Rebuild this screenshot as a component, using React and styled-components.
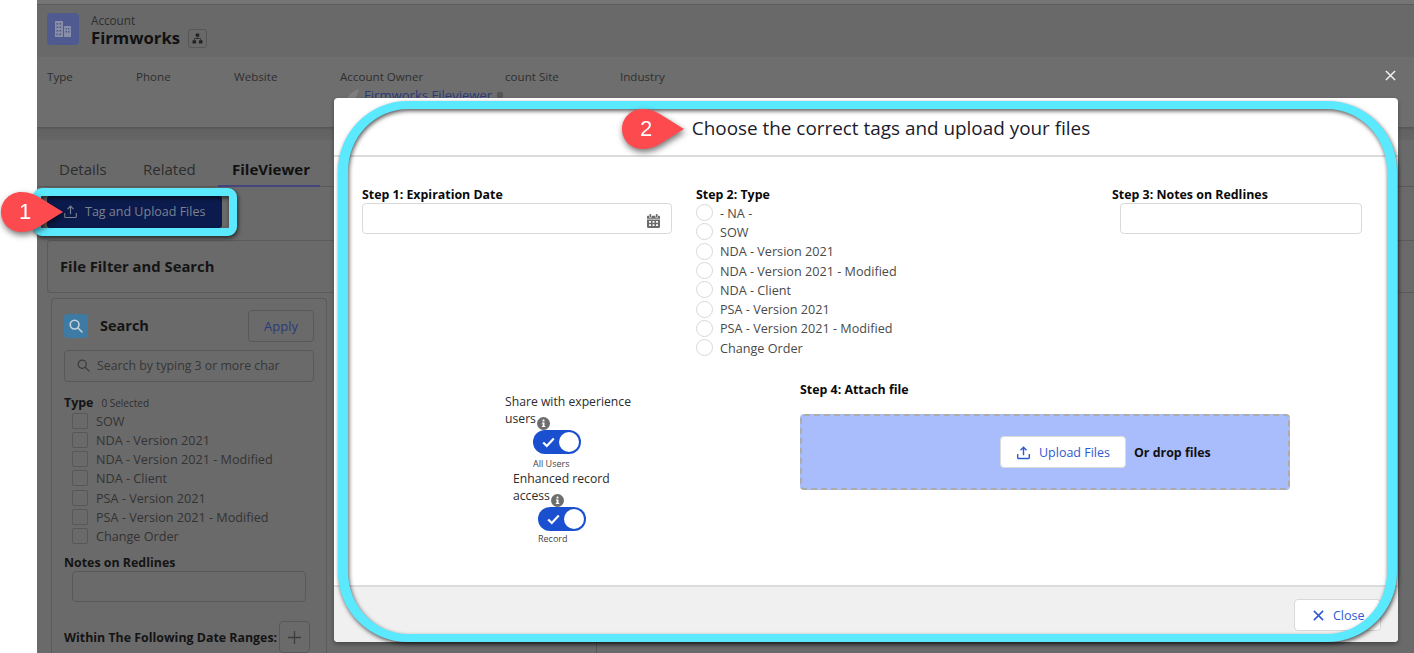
import React from "react";
import styled, { createGlobalStyle } from "styled-components";

const Global = createGlobalStyle`
  html, body { margin: 0; padding: 0; background: #fff; }
  body { font-family: "Open Sans", "Noto Sans", "Liberation Sans", sans-serif; }
  * { box-sizing: border-box; }
`;

const Screen = styled.div`
  position: relative;
  display: flex;
  width: 1414px;
  height: 653px;
  overflow: hidden;
  background: #fff;
`;
const Gutter = styled.div`width: 37px; flex: none; background: #fff;`;
const Page = styled.div`
  flex: 1;
  display: flex;
  flex-direction: column;
  min-width: 0;
  background: #6a6a6a;
  color: #333;
  font-size: 12px;
`;
const TopSliver = styled.div`
  height: 5px;
  background: #757575;
  border-bottom: 1px solid #5c5c5c;
`;
const RecordHeader = styled.div`
  height: 52px;
  display: flex;
  align-items: flex-start;
  padding: 8px 0 0 10px;
  background: #696969;
`;
const ObjectIcon = styled.div`
  width: 32px;
  height: 32px;
  border-radius: 4px;
  background: #4e5a90;
  display: grid;
  place-items: center;
`;
const RecordTitle = styled.div`
  margin-left: 12px;
  display: flex;
  flex-direction: column;
`;
const RecordType = styled.div`
  font-size: 11.7px;
  line-height: 14px;
  color: #2e2e2e;
`;
const RecordNameRow = styled.div`display: flex; align-items: center; gap: 8px; margin-top: 1px;`;
const RecordName = styled.div`
  font-size: 16.7px;
  line-height: 20px;
  font-weight: 700;
  color: #111;
`;
const HierarchyButton = styled.div`
  width: 19px;
  height: 19px;
  border: 1px solid #565656;
  border-radius: 3px;
  display: grid;
  place-items: center;
`;
const Highlights = styled.div`
  height: 70px;
  display: flex;
  padding: 13px 0 0 10px;
  background: #6e6e6e;
`;
const Field = styled.div`
  width: ${p => p.$w}px;
  flex: none;
  font-size: 11.6px;
  line-height: 14px;
  color: #2f2f2f;
`;
const OwnerLink = styled.div`
  display: flex;
  align-items: center;
  gap: 4px;
  margin-top: 4px;
  margin-left: 5px;
  color: #2b3a78;
  font-size: 13.1px;
  white-space: nowrap;
`;
const Strip = styled.div`
  height: 13px;
  background: linear-gradient(180deg, #555 0, #626262 3px, #666 100%);
`;
const Tabs = styled.div`
  height: 47px;
  display: flex;
  align-items: flex-end;
  padding-left: 22px;
  border-bottom: 1px solid #5a5a5a;
`;
const Tab = styled.div`
  width: ${p => p.$w}px;
  flex: none;
  height: 37px;
  padding-left: ${p => p.$pl}px;
  padding-top: 9px;
  font-size: 15px;
  line-height: 20px;
  font-weight: ${p => (p.$active ? 700 : 400)};
  color: ${p => (p.$active ? "#111" : "#2d2d2d")};
  border-bottom: 2px solid ${p => (p.$active ? "#43467f" : "transparent")};
  margin-bottom: -1px;
`;
const ActionBar = styled.div`
  height: 53px;
  padding: 9px 0 0 10px;
`;
const PrimaryButton = styled.div`
  width: 175px;
  height: 32px;
  display: flex;
  align-items: center;
  gap: 7px;
  padding-left: 16px;
  background: #0b1b4d;
  border-radius: 3px;
  color: #7c8290;
  font-size: 12.5px;
  white-space: nowrap;
`;
const CardHead = styled.div`
  height: 53px;
  margin-left: 10px;
  display: flex;
  align-items: center;
  padding-left: 12px;
  border: 1px solid #5a5a5a;
  border-right: none;
  border-top-left-radius: 4px;
  border-bottom-left-radius: 4px;
  font-size: 14.8px;
  font-weight: 700;
  color: #141414;
`;
const LowerRow = styled.div`
  flex: 1;
  display: flex;
  padding-top: 5px;
`;
const FilterPanel = styled.div`
  width: 276px;
  margin-left: 14px;
  flex: none;
  padding: 11px 12px 0 12px;
  border: 1px solid #5a5a5a;
  border-bottom: none;
  border-radius: 4px 4px 0 0;
`;
const ResultPane = styled.div`
  width: 100%;
  margin-left: 269px;
  border-left: 1px solid #565656;
`;
const SearchHead = styled.div`
  display: flex;
  align-items: center;
  height: 32px;
`;
const SearchIcon = styled.div`
  width: 24px;
  height: 24px;
  border-radius: 4px;
  background: #3d7ba5;
  display: grid;
  place-items: center;
`;
const SearchTitle = styled.div`
  flex: 1;
  margin-left: 12px;
  font-size: 14.5px;
  font-weight: 700;
  color: #141414;
`;
const ApplyButton = styled.div`
  width: 66px;
  height: 32px;
  border: 1px solid #585858;
  border-radius: 4px;
  display: grid;
  place-items: center;
  font-size: 13px;
  color: #2b3a78;
`;
const SearchBox = styled.div`
  height: 32px;
  margin-top: 8px;
  display: flex;
  align-items: center;
  gap: 7px;
  padding-left: 12px;
  border: 1px solid #585858;
  border-radius: 4px;
  color: #363636;
  font-size: 12.3px;
  white-space: nowrap;
`;
const TypeHead = styled.div`
  display: flex;
  align-items: baseline;
  gap: 8px;
  margin-top: 13px;
  line-height: 16px;
`;
const BoldLabel = styled.div`
  font-size: 12.4px;
  font-weight: 700;
  color: #141414;
  white-space: nowrap;
`;
const SmallCount = styled.span`font-size: 10px; color: #2e2e2e;`;
const CheckList = styled.div`display: flex; flex-direction: column; padding-left: 8px;`;
const CheckRow = styled.div`
  height: 19.3px;
  display: flex;
  align-items: center;
  gap: 8px;
  font-size: 12.65px;
  color: #333;
  white-space: nowrap;
`;
const CheckBox = styled.div`
  width: 16px;
  height: 16px;
  border: 1px solid #585858;
  border-radius: 2px;
`;
const NotesLabel = styled(BoldLabel)`margin-top: 8px; line-height: 17px;`;
const FilterInput = styled.div`
  width: 234px;
  height: 31px;
  margin-left: 8px;
  border: 1px solid #585858;
  border-radius: 4px;
`;
const RangeRow = styled.div`
  display: flex;
  align-items: center;
  margin-top: 19px;
`;
const PlusButton = styled.div`
  width: 31px;
  height: 32px;
  flex: none;
  border: 1px solid #585858;
  border-radius: 4px;
  display: grid;
  place-items: center;
  margin-left: auto;
  margin-right: 4px;
`;

/* Modal, over the page */
const ModalClose = styled.div`
  position: absolute;
  left: 1384px;
  top: 69px;
  width: 12px;
  height: 12px;
  display: grid;
  place-items: center;
`;
const Modal = styled.div`
  position: absolute;
  left: 334px;
  top: 98px;
  width: 1064px;
  height: 544px;
  display: flex;
  flex-direction: column;
  background: #fff;
  border-radius: 4px;
  box-shadow: 0 2px 4px rgba(0,0,0,.35);
  overflow: hidden;
  color: #444;
`;
const ModalHeader = styled.div`
  height: 59px;
  flex: none;
  display: flex;
  justify-content: center;
  padding: 17px 0 0 50px;
  border-bottom: 2px solid #dcdcdc;
`;
const ModalTitle = styled.div`
  font-size: 18.9px;
  line-height: 26px;
  color: #1b1b2b;
  white-space: nowrap;
`;
const ModalBody = styled.div`
  flex: 1;
  display: flex;
  flex-direction: column;
  padding: 29px 36px 0 28px;
`;
const StepsRow = styled.div`
  display: grid;
  grid-template-columns: 334px 416px 250px;
`;
const StepLabel = styled.div`
  font-size: 12.4px;
  line-height: 17px;
  font-weight: 700;
  color: #0a0a0a;
  white-space: nowrap;
`;
const DateInput = styled.div`
  width: 310px;
  height: 31px;
  display: flex;
  align-items: center;
  justify-content: flex-end;
  padding: 4px 11px 0 0;
  border: 1px solid #d9d9d9;
  border-radius: 4px;
`;
const NotesInput = styled.div`
  width: 242px;
  height: 31px;
  margin-left: 8px;
  border: 1px solid #d9d9d9;
  border-radius: 4px;
`;
const RadioList = styled.div`display: flex; flex-direction: column;`;
const RadioRow = styled.div`
  height: 19.3px;
  display: flex;
  align-items: center;
  gap: 7px;
  font-size: 12.65px;
  color: #4a4a4a;
  white-space: nowrap;
`;
const Radio = styled.div`
  width: 17px;
  height: 17px;
  border: 1px solid #d8d8d8;
  border-radius: 50%;
`;
const LowerGrid = styled.div`
  display: flex;
  margin-top: 24px;
`;
const ShareColumn = styled.div`
  width: 438px;
  flex: none;
  padding-left: 143px;
  padding-top: 12px;
`;
const ShareBlock = styled.div`
  width: 130px;
  margin-left: ${p => p.$indent}px;
  margin-top: ${p => p.$top}px;
`;
const ShareText = styled.div`
  font-size: 12.2px;
  line-height: 17px;
  color: #2c2c2c;
`;
const InfoDot = styled.span`
  display: inline-flex;
  vertical-align: -7px;
  margin-left: 1px;
`;
const SwitchPill = styled.div`
  width: 48px;
  height: 24px;
  margin-left: ${p => p.$left}px;
  display: flex;
  align-items: center;
  justify-content: space-between;
  padding: 0 2px 0 9px;
  border-radius: 12px;
  background: #1a50cf;
`;
const SwitchKnob = styled.div`
  width: 20px;
  height: 20px;
  border-radius: 50%;
  background: #fff;
`;
const SwitchCaption = styled.div`
  margin-left: ${p => p.$left}px;
  margin-top: ${p => p.$top}px;
  font-size: 9px;
  line-height: 15px;
  color: #444;
`;
const AttachColumn = styled.div`display: flex; flex-direction: column;`;
const DropZone = styled.div`
  width: 490px;
  height: 76px;
  margin-top: 16px;
  display: flex;
  align-items: center;
  padding-left: 198px;
  gap: 8px;
  background: #a9bdfc;
  border: 2px dashed #aeaca8;
  border-radius: 4px;
`;
const UploadButton = styled.div`
  width: 126px;
  height: 32px;
  display: flex;
  align-items: center;
  justify-content: center;
  gap: 8px;
  background: #fff;
  border: 1px solid #dcdcdc;
  border-radius: 4px;
  font-size: 12.5px;
  color: #2f59d0;
`;
const DropText = styled.div`
  font-size: 12.4px;
  font-weight: 700;
  color: #111;
  white-space: nowrap;
`;
const ModalFooter = styled.div`
  height: 57px;
  flex: none;
  display: flex;
  justify-content: flex-end;
  padding: 12px 17px 0 0;
  background: #f0f0f0;
  border-top: 2px solid #dcdcdc;
`;
const CloseButton = styled.div`
  width: 87px;
  height: 32px;
  display: flex;
  align-items: center;
  gap: 9px;
  padding-left: 18px;
  background: #fff;
  border: 1px solid #d9d9d9;
  border-radius: 4px;
  font-size: 12.5px;
  color: #2f59d0;
`;

/* Annotations, drawn over the screenshot */
const HighlightRing = styled.div`
  position: absolute;
  left: ${p => p.$x}px;
  top: ${p => p.$y}px;
  width: ${p => p.$w}px;
  height: ${p => p.$h}px;
  border-style: solid;
  border-color: #5be9ff;
  border-width: ${p => p.$sw};
  border-radius: ${p => p.$r}px;
  filter: drop-shadow(1px 2px 2px rgba(0,0,0,.65));
  pointer-events: none;
`;
const Callout = styled.div`
  position: absolute;
  left: ${p => p.$x}px;
  top: ${p => p.$y}px;
  width: 62px;
  height: 40px;
  filter: drop-shadow(1px 3px 3px rgba(0,0,0,.55));
`;
const CalloutNumber = styled.div`
  position: absolute;
  left: 0;
  top: 0;
  width: 48px;
  height: 40px;
  display: grid;
  place-items: center;
  font-family: "Liberation Sans", sans-serif;
  font-size: 22px;
  color: #fff;
`;

const UploadIcon = ({ color, size = 16, w = 1.5 }) => (
  <svg width={size} height={size} viewBox="0 0 16 16" fill="none" stroke={color} strokeWidth={w}>
    <path d="M8 11V2.500M4.800 5.500 8 2.300l3.200 3.200" />
    <path d="M1.800 9.500v4.200c0 .4.3.7.7.7h11c.4 0 .7-.3.7-.7V9.500" />
  </svg>
);
const SearchGlyph = ({ color, size = 14, w = 1.6 }) => (
  <svg width={size} height={size} viewBox="0 0 14 14" fill="none" stroke={color} strokeWidth={w}>
    <circle cx="5.6" cy="5.6" r="4.4" />
    <path d="M9 9l4 4" strokeLinecap="round" />
  </svg>
);
const Cross = ({ color, size = 12, w = 1.8 }) => (
  <svg width={size} height={size} viewBox="0 0 12 12" fill="none" stroke={color} strokeWidth={w}>
    <path d="M1 1l10 10M11 1 1 11" />
  </svg>
);
const BuildingGlyph = () => (
  <svg width="18" height="18" viewBox="0 0 18 18" fill="#8a8fa8">
    <rect x="1" y="1" width="8" height="16" rx=".6" />
    <rect x="10" y="6" width="7" height="11" rx=".6" />
    <g fill="#4e5a90">
      <rect x="2.500" y="3" width="1.6" height="1.6" /><rect x="5.500" y="3" width="1.6" height="1.6" />
      <rect x="2.500" y="6.500" width="1.6" height="1.6" /><rect x="5.500" y="6.500" width="1.6" height="1.6" />
      <rect x="2.500" y="10" width="1.6" height="1.6" /><rect x="5.500" y="10" width="1.6" height="1.6" />
      <rect x="2.500" y="13.500" width="1.6" height="1.6" /><rect x="5.500" y="13.500" width="1.6" height="1.6" />
      <rect x="11.500" y="8" width="1.5" height="1.5" /><rect x="14" y="8" width="1.5" height="1.5" />
      <rect x="11.500" y="11" width="1.5" height="1.5" /><rect x="14" y="11" width="1.5" height="1.5" />
    </g>
  </svg>
);
const HierarchyGlyph = () => (
  <svg width="11" height="11" viewBox="0 0 11 11" fill="#222">
    <rect x="3.700" y=".5" width="3.600" height="3.200" rx=".4" />
    <rect x=".5" y="7.300" width="3.600" height="3.200" rx=".4" />
    <rect x="6.900" y="7.300" width="3.600" height="3.200" rx=".4" />
    <path d="M5.200 3.700h.6v1.600h3.100v2h-.6V5.900H2.600v1.400H2v-2h3.200z" />
  </svg>
);
const CalendarGlyph = () => (
  <svg width="13" height="14" viewBox="0 0 13 14" fill="#6b6b6b">
    <rect x="2.500" y="0" width="1.6" height="3" rx=".5" />
    <rect x="8.900" y="0" width="1.6" height="3" rx=".5" />
    <path d="M1 1.700h1v1.800h2.600V1.700h3.800v1.800H11V1.700h1c.5 0 1 .4 1 1V4.800H0V2.700c0-.6.5-1 1-1z" />
    <path fillRule="evenodd" d="M0 5.600h13v7.200c0 .6-.5 1.200-1 1.200H1c-.5 0-1-.6-1-1.200zM2 7v1.800h2V7zm3.500 0v1.800h2V7zM9 7v1.800h2V7zm-7 3.200V12h2v-1.800zm3.500 0V12h2v-1.800zm3.500 0V12h2v-1.800z" />
  </svg>
);
const InfoGlyph = () => (
  <svg width="13" height="13" viewBox="0 0 13 13">
    <circle cx="6.5" cy="6.5" r="6.5" fill="#6e6e6e" />
    <rect x="5.500" y="2.600" width="2" height="2" rx=".6" fill="#fff" />
    <path d="M4.900 5.500h2.600v3.600h.8v1H4.800v-1h.8V6.500h-.7z" fill="#fff" />
  </svg>
);
const CheckGlyph = () => (
  <svg width="13" height="11" viewBox="0 0 13 11" fill="none" stroke="#fff" strokeWidth="2.2">
    <path d="M1.200 5.500 4.800 9l7-7.500" />
  </svg>
);
const PlusGlyph = () => (
  <svg width="13" height="13" viewBox="0 0 13 13" stroke="#3d3d3d" strokeWidth="1.3">
    <path d="M6.500 0v13M0 6.500h13" />
  </svg>
);
const AvatarGlyph = () => (
  <svg width="15" height="14" viewBox="0 0 15 14" fill="#7f7f7f">
    <path d="M1 14C2 8 7 3 14 1c-1 5-4 11-8 13z" />
  </svg>
);
const LinkTail = () => (
  <svg width="8" height="8" viewBox="0 0 8 8" fill="#565656">
    <circle cx="4" cy="4" r="3.200" />
  </svg>
);
const Teardrop = () => (
  <svg width="62" height="40" viewBox="0 0 62 40">
    <path d="M20 0C29 0 35 3 41 7L62 20 41 33C35 37 29 40 20 40 9 40 0 31 0 20S9 0 20 0z" fill="#fd4a4f" />
  </svg>
);

const filterTypes = [
  "SOW",
  "NDA - Version 2021",
  "NDA - Version 2021 - Modified",
  "NDA - Client",
  "PSA - Version 2021",
  "PSA - Version 2021 - Modified",
  "Change Order",
];
const uploadTypes = ["- NA -", ...filterTypes];

const Toggle = ({ left, caption, captionTop }) => (
  <>
    <SwitchPill $left={left}>
      <CheckGlyph />
      <SwitchKnob />
    </SwitchPill>
    <SwitchCaption $left={left} $top={captionTop}>{caption}</SwitchCaption>
  </>
);

export default function App() {
  return (
    <Screen>
      <Global />
      <Gutter />
      <Page>
        <TopSliver />
        <RecordHeader>
          <ObjectIcon><BuildingGlyph /></ObjectIcon>
          <RecordTitle>
            <RecordType>Account</RecordType>
            <RecordNameRow>
              <RecordName>Firmworks</RecordName>
              <HierarchyButton><HierarchyGlyph /></HierarchyButton>
            </RecordNameRow>
          </RecordTitle>
        </RecordHeader>
        <Highlights>
          <Field $w={89}>Type</Field>
          <Field $w={98}>Phone</Field>
          <Field $w={106}>Website</Field>
          <Field $w={165}>
            Account Owner
            <OwnerLink><AvatarGlyph />Firmworks Fileviewer<LinkTail /></OwnerLink>
          </Field>
          <Field $w={115}>count Site</Field>
          <Field $w={100}>Industry</Field>
        </Highlights>
        <Strip />
        <Tabs>
          <Tab $w={84} $pl={0}>Details</Tab>
          <Tab $w={75} $pl={0}>Related</Tab>
          <Tab $w={102} $pl={14} $active>FileViewer</Tab>
        </Tabs>
        <ActionBar>
          <PrimaryButton><UploadIcon color="#7c8290" size={15} w={1.2} />Tag and Upload Files</PrimaryButton>
        </ActionBar>
        <CardHead>File Filter and Search</CardHead>
        <LowerRow>
          <FilterPanel>
            <SearchHead>
              <SearchIcon><SearchGlyph color="#c5d3dc" /></SearchIcon>
              <SearchTitle>Search</SearchTitle>
              <ApplyButton>Apply</ApplyButton>
            </SearchHead>
            <SearchBox><SearchGlyph color="#3a3a3a" size={13} w={1.3} />Search by typing 3 or more char</SearchBox>
            <TypeHead><BoldLabel>Type</BoldLabel><SmallCount>0 Selected</SmallCount></TypeHead>
            <CheckList>
              {filterTypes.map(t => (
                <CheckRow key={t}><CheckBox />{t}</CheckRow>
              ))}
            </CheckList>
            <NotesLabel>Notes on Redlines</NotesLabel>
            <FilterInput />
            <RangeRow>
              <BoldLabel>Within The Following Date Ranges:</BoldLabel>
              <PlusButton><PlusGlyph /></PlusButton>
            </RangeRow>
          </FilterPanel>
          <ResultPane />
        </LowerRow>
      </Page>

      <ModalClose><Cross color="#f2f2f2" size={11} w={1.6} /></ModalClose>
      <Modal>
        <ModalHeader>
          <ModalTitle>Choose the correct tags and upload your files</ModalTitle>
        </ModalHeader>
        <ModalBody>
          <StepsRow>
            <div>
              <StepLabel>Step 1: Expiration Date</StepLabel>
              <DateInput><CalendarGlyph /></DateInput>
            </div>
            <div>
              <StepLabel>Step 2: Type</StepLabel>
              <RadioList>
                {uploadTypes.map(t => (
                  <RadioRow key={t}><Radio />{t}</RadioRow>
                ))}
              </RadioList>
            </div>
            <div>
              <StepLabel>Step 3: Notes on Redlines</StepLabel>
              <NotesInput />
            </div>
          </StepsRow>
          <LowerGrid>
            <ShareColumn>
              <ShareBlock $indent={0} $top={0}>
                <ShareText>Share with experience users<InfoDot><InfoGlyph /></InfoDot></ShareText>
                <Toggle left={28} captionTop={2} caption="All Users" />
              </ShareBlock>
              <ShareBlock $indent={8} $top={-1}>
                <ShareText>Enhanced record access<InfoDot><InfoGlyph /></InfoDot></ShareText>
                <Toggle left={25} captionTop={0} caption="Record" />
              </ShareBlock>
            </ShareColumn>
            <AttachColumn>
              <StepLabel>Step 4: Attach file</StepLabel>
              <DropZone>
                <UploadButton><UploadIcon color="#2f59d0" size={15} />Upload Files</UploadButton>
                <DropText>Or drop files</DropText>
              </DropZone>
            </AttachColumn>
          </LowerGrid>
        </ModalBody>
        <ModalFooter>
          <CloseButton><Cross color="#2f59d0" size={11} w={1.7} />Close</CloseButton>
        </ModalFooter>
      </Modal>

      <HighlightRing $x={33} $y={188} $w={204} $h={48} $sw="8px" $r={9} />
      <HighlightRing $x={338} $y={101} $w={1059} $h={541} $sw="8px 10px" $r={70} />
      <Callout $x={1} $y={192}><Teardrop /><CalloutNumber>1</CalloutNumber></Callout>
      <Callout $x={622} $y={109}><Teardrop /><CalloutNumber>2</CalloutNumber></Callout>
    </Screen>
  );
}
